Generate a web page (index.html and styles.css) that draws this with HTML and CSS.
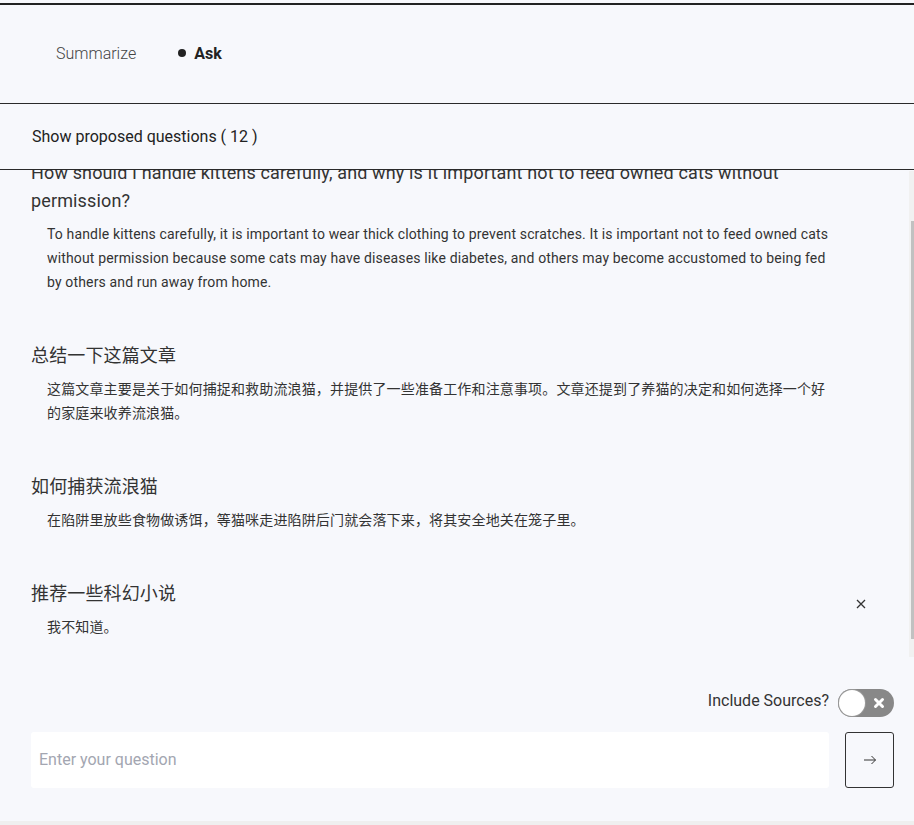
FILE: index.html
```html
<!DOCTYPE html>
<html lang="en">
<head>
<meta charset="utf-8">
<title>Ask</title>
<link rel="stylesheet" href="styles.css">
</head>
<body>
<div class="app">
  <div class="topline"></div>
  <header class="modes">
    <span class="mode">Summarize</span>
    <span class="mode active"><span class="dot"></span>Ask</span>
  </header>
  <div class="proposals">Show proposed questions ( 12 )</div>
  <div class="chat-wrap">
    <main class="chat" id="chat">
      <div class="qa">
        <div class="qa-text">
          <h2 class="q">How should I handle kittens carefully, and why is it important not to feed owned cats without permission?</h2>
          <p class="a">To handle kittens carefully, it is important to wear thick clothing to prevent scratches. It is important not to feed owned cats without permission because some cats may have diseases like diabetes, and others may become accustomed to being fed by others and run away from home.</p>
        </div>
      </div>
      <div class="qa">
        <div class="qa-text">
          <h2 class="q">总结一下这篇文章</h2>
          <p class="a">这篇文章主要是关于如何捕捉和救助流浪猫，并提供了一些准备工作和注意事项。文章还提到了养猫的决定和如何选择一个好的家庭来收养流浪猫。</p>
        </div>
      </div>
      <div class="qa">
        <div class="qa-text">
          <h2 class="q">如何捕获流浪猫</h2>
          <p class="a">在陷阱里放些食物做诱饵，等猫咪走进陷阱后门就会落下来，将其安全地关在笼子里。</p>
        </div>
      </div>
      <div class="qa">
        <div class="qa-text">
          <h2 class="q">推荐一些科幻小说</h2>
          <p class="a">我不知道。</p>
        </div>
        <button class="remove" aria-label="Remove">
          <svg width="10" height="10" viewBox="0 0 10 10"><path d="M1 1L9 9M9 1L1 9" stroke="#333" stroke-width="1.3" fill="none"/></svg>
        </button>
      </div>
    </main>
    <div class="scrollbar"><div class="thumb"></div></div>
  </div>
  <footer class="composer">
    <div class="sources">
      <span class="sources-label">Include Sources?</span>
      <span class="toggle">
        <span class="knob"></span>
        <svg class="toggle-x" width="12" height="12" viewBox="0 0 12 12"><path d="M2.5 2.5L9.5 9.5M9.5 2.5L2.5 9.5" stroke="#fff" stroke-width="3" stroke-linecap="round" fill="none"/></svg>
      </span>
    </div>
    <div class="ask-row">
      <input class="ask-input" type="text" placeholder="Enter your question">
      <button class="send" aria-label="Send">
        <svg width="14" height="10" viewBox="0 0 14 10"><path d="M1 5H12.5M8.5 1L12.5 5L8.5 9" stroke="#333" stroke-width="1" fill="none"/></svg>
      </button>
    </div>
  </footer>
</div>
<script src="script.js"></script>
</body>
</html>
```
FILE: styles.css
```css
* { box-sizing: border-box; }
html, body { margin: 0; padding: 0; }
body {
  background: #efefef;
  font-family: Roboto, "Noto Sans CJK SC", sans-serif;
  color: #333;
  width: 914px;
  height: 825px;
  overflow: hidden;
}
.app {
  height: 821px;
  background: #f7f8fc;
  display: flex;
  flex-direction: column;
  padding-top: 3px;
}
.topline {
  height: 2px;
  background: #222;
  flex: none;
}
.modes {
  flex: none;
  height: 99px;
  border-bottom: 1px solid #2a2a2a;
  display: flex;
  align-items: center;
  padding: 0 0 2px 56px;
  gap: 42px;
  font-size: 16px;
}
.mode {
  font-weight: 300;
  color: #444;
  display: flex;
  align-items: center;
}
.mode.active {
  font-weight: 700;
  color: #222;
}
.dot {
  width: 8px;
  height: 8px;
  border-radius: 50%;
  background: #222;
  margin-right: 8px;
}
.proposals {
  flex: none;
  height: 66px;
  border-bottom: 1px solid #2a2a2a;
  display: flex;
  align-items: center;
  padding-left: 32px;
  font-size: 16px;
  color: #222;
  padding-bottom: 1px;
}
.chat-wrap {
  flex: 1;
  min-height: 0;
  display: flex;
}
.chat {
  flex: 1;
  overflow: hidden;
  padding: 22px 15px 15px 31px;
}
.scrollbar {
  flex: none;
  width: 5px;
  margin-top: 1px;
  background: #f1f1f1;
  padding-left: 2px;
}
.thumb {
  margin-top: 50px;
  height: 418px;
  background: #c1c1c1;
}
.qa {
  display: flex;
  align-items: center;
  padding: 24px 0;
}
.qa-text {
  width: 799px;
  flex: none;
}
.q {
  margin: 0;
  font-size: 18px;
  font-weight: 400;
  line-height: 28px;
  color: #333;
  letter-spacing: 0.14px;
}
.a {
  margin: 7px 0 0 16px;
  font-size: 14px;
  line-height: 24px;
  color: #333;
  letter-spacing: 0.15px;
}
.remove {
  flex: 1;
  border: 0;
  background: none;
  padding: 0;
  height: 20px;
  display: flex;
  align-items: center;
  justify-content: center;
  margin: -12px 0 0 -2px;
}
.composer {
  flex: none;
  height: 164px;
  padding: 32px 20px 0 31px;
}
.sources {
  height: 28px;
  display: flex;
  justify-content: flex-end;
  align-items: center;
  gap: 9px;
}
.sources-label {
  font-size: 16px;
  color: #333;
  padding-bottom: 5px;
}
.toggle {
  width: 56px;
  height: 28px;
  border-radius: 14px;
  background: #888;
  position: relative;
  display: inline-block;
}
.knob {
  position: absolute;
  left: 1px;
  top: 1px;
  width: 26px;
  height: 26px;
  border-radius: 50%;
  background: #fff;
  box-shadow: 0 0 0 1px #999;
}
.toggle-x {
  position: absolute;
  right: 9px;
  top: 8px;
}
.ask-row {
  display: flex;
  gap: 16px;
  margin-top: 15px;
}
.ask-input {
  flex: 1;
  height: 56px;
  border: 0;
  border-radius: 3px;
  background: #fff;
  font-family: Roboto, sans-serif;
  font-size: 16px;
  padding: 0 8px 2px;
  color: #333;
  outline: none;
}
.ask-input::placeholder { color: #a3a6b1; }
.send {
  width: 49px;
  height: 56px;
  flex: none;
  border: 1px solid #333;
  border-radius: 3px;
  background: transparent;
  display: flex;
  align-items: center;
  justify-content: center;
  padding: 0;
}
```
FILE: script.js
```js
document.getElementById('chat').scrollTop = 57;
```
